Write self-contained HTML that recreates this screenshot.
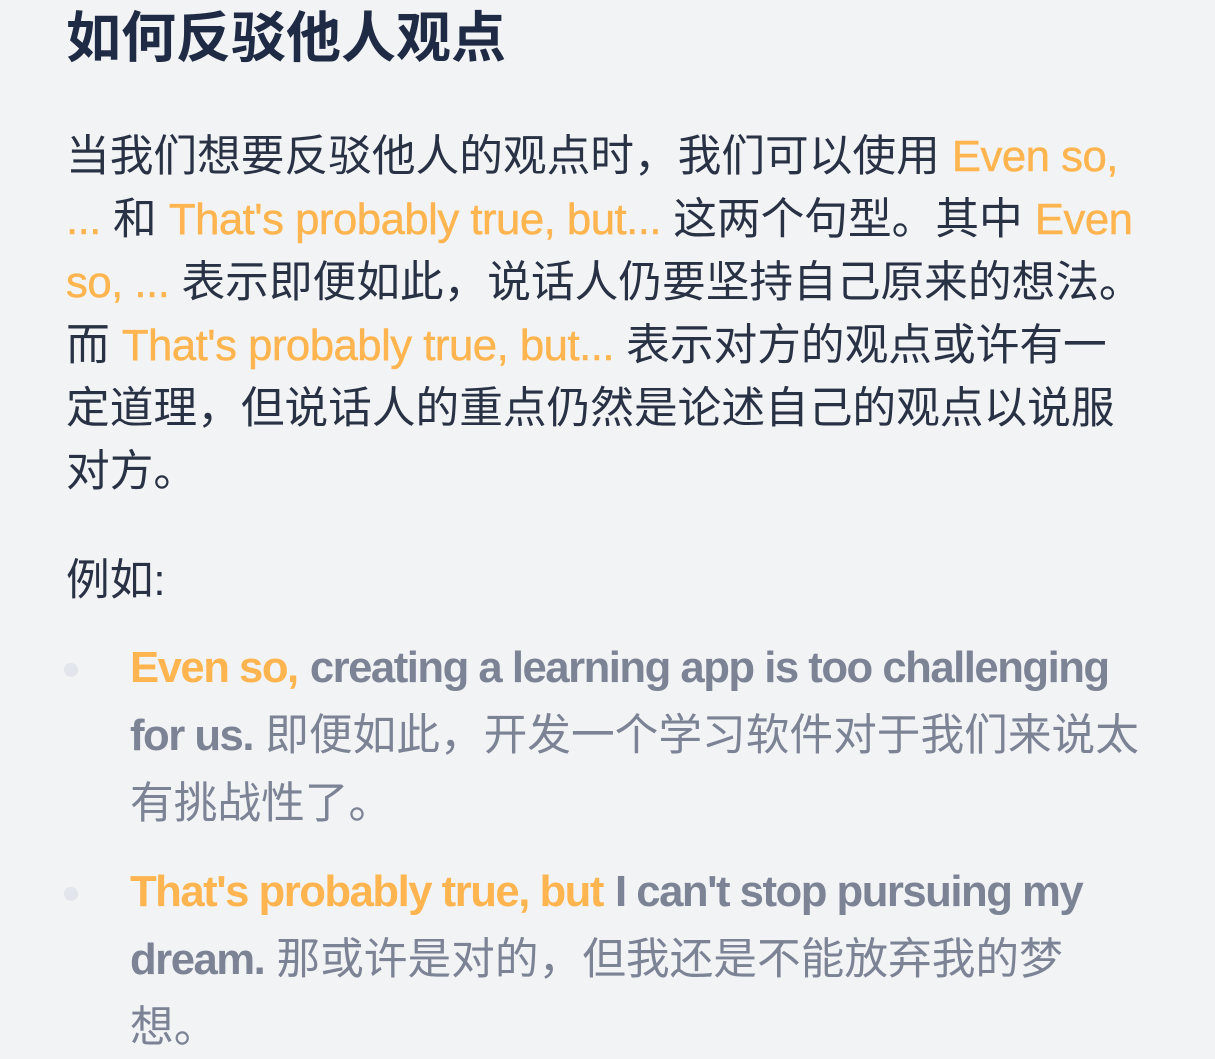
<!DOCTYPE html>
<html><head><meta charset="utf-8"><style>
html,body{margin:0;padding:0;background:#f2f3f5;width:1215px;height:1059px;overflow:hidden}
body{font-family:"Liberation Sans","Noto Sans CJK SC",sans-serif;position:relative}
.t{position:absolute;left:66px;top:6px;font-size:55px;line-height:64px;font-weight:bold;color:#1f2a44;white-space:nowrap}
.p{position:absolute;left:66px;top:125px;font-size:43.7px;line-height:63px;color:#283244;white-space:nowrap}
.o{color:#ffb54f}
.p .o{letter-spacing:-0.5px;-webkit-text-stroke:0.5px #ffb54f}
.e{position:absolute;left:66px;top:549px;font-size:43.7px;line-height:63px;color:#283244}
.li{position:absolute;left:130px;font-size:43.7px;line-height:68px;color:#7b8395;white-space:nowrap}
.li b{font-weight:bold;letter-spacing:-1.5px}
.dot{position:absolute;left:64px;width:14px;height:14px;border-radius:50%;background:#e2e5eb}
</style></head><body>
<div class="t">如何反驳他人观点</div>
<div class="p">当我们想要反驳他人的观点时，我们可以使用 <span class="o">Even so,</span><br><span class="o">...</span> 和 <span class="o">That's probably true, but...</span> 这两个句型。其中 <span class="o">Even</span><br><span class="o">so, ...</span> 表示即便如此，说话人仍要坚持自己原来的想法。<br>而 <span class="o">That's probably true, but...</span> 表示对方的观点或许有一<br>定道理，但说话人的重点仍然是论述自己的观点以说服<br>对方。</div>
<div class="e">例如:</div>
<div class="dot" style="top:663px"></div>
<div class="li" style="top:634px"><b class="o">Even so,</b> <b>creating a learning app is too challenging</b><br><b>for us.</b> 即便如此，开发一个学习软件对于我们来说太<br>有挑战性了。</div>
<div class="dot" style="top:887px"></div>
<div class="li" style="top:858px"><b class="o">That's probably true, but</b> <b>I can't stop pursuing my</b><br><b>dream.</b> 那或许是对的，但我还是不能放弃我的梦<br>想。</div>
</body></html>
